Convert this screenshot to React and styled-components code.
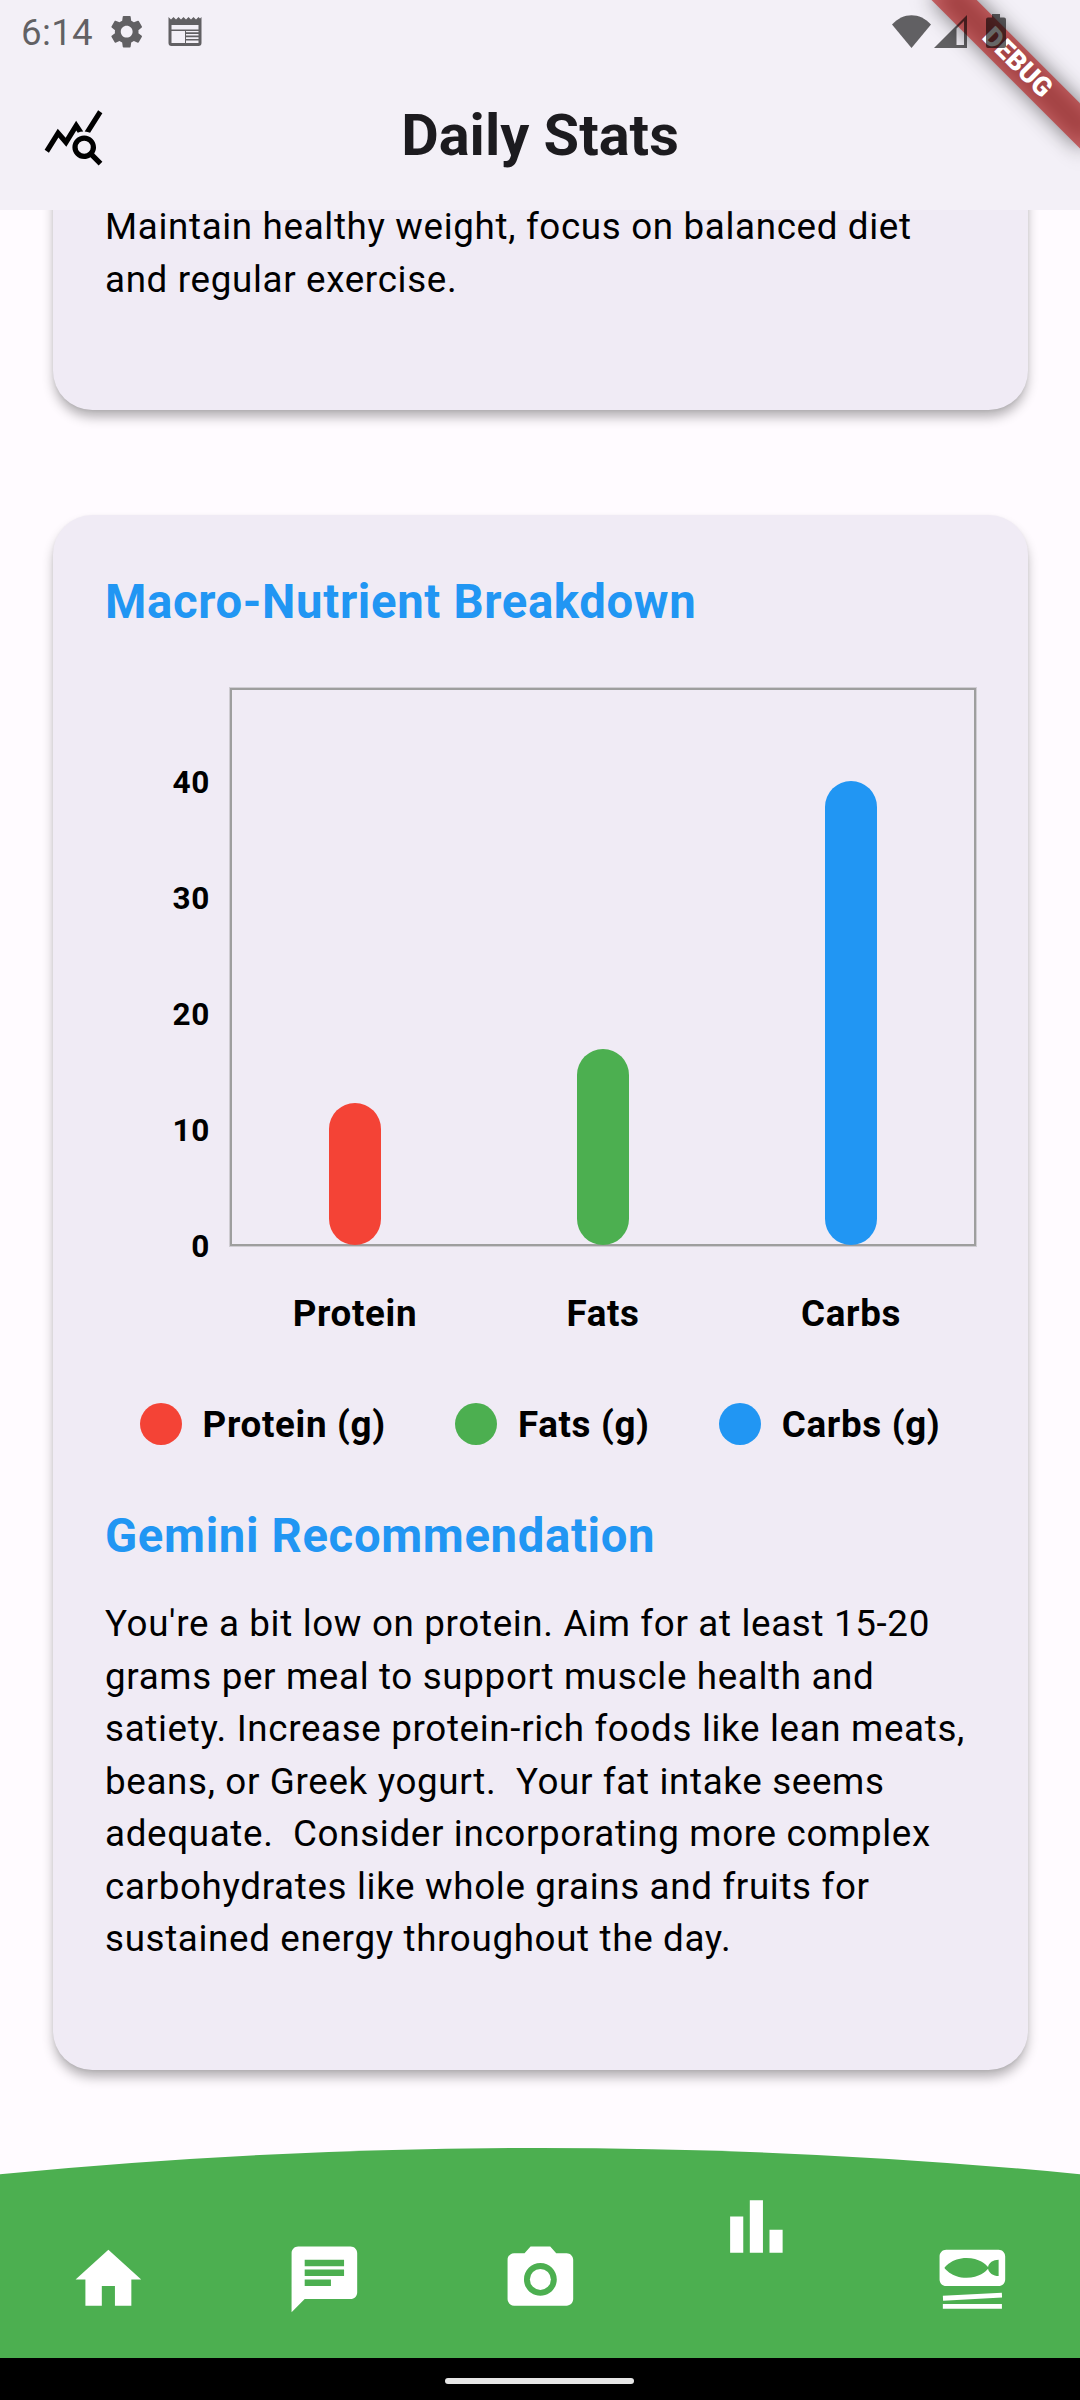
import React from 'react';
import styled, { createGlobalStyle } from 'styled-components';
import { MdHome, MdChat, MdCameraAlt, MdBarChart, MdSetMeal, MdQueryStats, MdSettings } from 'react-icons/md';

const Global = createGlobalStyle`
  *, *::before { box-sizing: border-box; }
  body { margin: 0; background: #fffbff; }
`;

const Screen = styled.div`
  position: relative;
  display: flex;
  flex-direction: column;
  width: 1080px;
  height: 2400px;
  overflow: hidden;
  background: #fffbff;
  color: #000;
  font-family: Roboto, "Noto Sans", sans-serif;
`;

const Header = styled.header`
  display: flex;
  flex-direction: column;
  flex: none;
  height: 210px;
  background: #f3f0f7;
`;

const StatusBar = styled.div`
  position: relative;
  z-index: 3;
  display: flex;
  align-items: center;
  justify-content: space-between;
  height: 63px;
  padding: 0 74px 0 21px;
  color: rgba(0, 0, 0, 0.6);
`;

const StatusGroup = styled.div`
  display: flex;
  align-items: center;
  gap: ${(p) => p.$gap}px;
  padding-bottom: ${(p) => p.$lift || 0}px;
  svg { display: block; }
`;

const Clock = styled.span`
  width: 71px;
  font-size: 36.75px;
  line-height: 44px;
  letter-spacing: 0.3px;
  padding-top: 3px;
  margin-right: -6px;
`;

const AppBar = styled.div`
  display: grid;
  grid-template-columns: 147px 1fr 147px;
  align-items: center;
  justify-items: center;
  height: 147px;
  svg { display: block; color: #000; }
`;

const Title = styled.h1`
  margin: 0;
  padding-bottom: 4px;
  font-size: 57.75px;
  line-height: 74px;
  font-weight: 700;
  color: #1c1b1f;
`;

const BannerClip = styled.div`
  position: absolute;
  z-index: 2;
  top: 0;
  right: 0;
  width: 240px;
  height: 210px;
  overflow: hidden;
`;

const Banner = styled.div`
  position: absolute;
  top: 73px;
  left: 135px;
  width: 210px;
  height: 31.5px;
  transform-origin: 105px -73px;
  transform: rotate(45deg);
  &::before {
    content: "";
    position: absolute;
    inset: 0;
    background: rgba(0, 0, 0, 0.5);
    filter: blur(10.4px);
  }
`;

const BannerText = styled.div`
  position: relative;
  height: 100%;
  background: rgba(183, 28, 28, 0.627);
  color: #fff;
  font-size: 26.8px;
  font-weight: 900;
  line-height: 31.5px;
  text-align: center;
`;

const Content = styled.main`
  display: flex;
  flex-direction: column;
  flex: 1;
  gap: 105px;
  min-height: 0;
  overflow: hidden;
  padding: 0 52.5px;
`;

const Card = styled.section`
  flex: none;
  background: #f0ebf5;
  border-radius: 39.4px;
  margin-top: ${(p) => (p.$scrolled ? -110 : 0)}px;
  padding: ${(p) => (p.$scrolled ? 101 : 53.5)}px 52.5px 104px;
  box-shadow: 0 8px 12px -1px rgba(0, 0, 0, 0.3), 0 1px 3px rgba(0, 0, 0, 0.06);
`;

const Heading = styled.h2`
  margin: 0;
  padding-top: ${(p) => p.$top || 0}px;
  font-size: 47.25px;
  line-height: 67.5px;
  letter-spacing: 0.66px;
  font-weight: 700;
  color: #2196f3;
`;

const Paragraph = styled.p`
  margin: 0;
  padding-top: ${(p) => p.$top || 0}px;
  font-size: 36.75px;
  line-height: 52.5px;
  letter-spacing: 0.66px;
  white-space: pre;
`;

const Chart = styled.div`
  display: grid;
  grid-template-columns: 125px 746px;
  margin-top: 52px;
`;

const Axis = styled.div`
  display: flex;
  flex-direction: column-reverse;
  justify-content: flex-start;
  height: 558px;
  text-align: right;
  padding-right: 20px;
`;

const Tick = styled.span`
  display: flex;
  align-items: center;
  justify-content: flex-end;
  flex: none;
  height: 116px;
  margin-bottom: ${(p) => (p.$first ? -58.2 : 0)}px;
  font-size: 31.5px;
  font-weight: 700;
  letter-spacing: 0.66px;
`;

const Plot = styled.div`
  display: grid;
  grid-template-columns: repeat(3, 248px);
  justify-content: center;
  align-items: end;
  justify-items: center;
  height: 558px;
  border: 2px solid #9e9e9e;
  box-shadow: 0 0 0 1px rgba(158, 158, 158, 0.4);
`;

const Bar = styled.div`
  width: 52.5px;
  border-radius: 26.25px;
  margin-bottom: -0.7px;
  background: ${(p) => p.$color};
`;

const Labels = styled.div`
  grid-column: 2;
  display: grid;
  grid-template-columns: repeat(3, 248px);
  justify-content: center;
  justify-items: center;
  padding-top: 42px;
`;

const Strong = styled.span`
  padding-top: ${(p) => p.$top || 0}px;
  font-size: 36.75px;
  line-height: 52.5px;
  font-weight: 700;
  letter-spacing: 0.66px;
`;

const Legend = styled.div`
  display: flex;
  justify-content: space-around;
  margin-top: 56px;
`;

const LegendItem = styled.div`
  display: flex;
  align-items: center;
  gap: 21px;
`;

const Dot = styled.i`
  width: 42px;
  height: 42px;
  border-radius: 50%;
  background: ${(p) => p.$color};
`;

const NavBar = styled.nav`
  flex: none;
  display: grid;
  grid-template: 210px / 1fr;
  height: 210px;
  > * { grid-area: 1 / 1; }
`;

const NavItems = styled.div`
  display: grid;
  grid-template-columns: repeat(5, 1fr);
  justify-items: center;
  color: #fff;
`;

const NavItem = styled.div`
  padding-top: ${(p) => (p.$active ? 39 : 92)}px;
  svg { display: block; }
`;

const Gesture = styled.footer`
  flex: none;
  display: flex;
  justify-content: center;
  height: 42px;
  padding: 20px 1px 0 0;
  background: #000;
`;

const Handle = styled.div`
  width: 189px;
  height: 6px;
  border-radius: 3px;
  background: #e6e6e6;
`;

const data = [
  { name: 'Protein', value: 12.2, color: '#f44336' },
  { name: 'Fats', value: 16.9, color: '#4caf50' },
  { name: 'Carbs', value: 40, color: '#2196f3' },
];

const nav = [
  { Icon: MdHome }, { Icon: MdChat }, { Icon: MdCameraAlt }, { Icon: MdBarChart, active: true }, { Icon: MdSetMeal },
];

const advice = `You're a bit low on protein. Aim for at least 15-20
grams per meal to support muscle health and
satiety. Increase protein-rich foods like lean meats,
beans, or Greek yogurt.  Your fat intake seems
adequate.  Consider incorporating more complex
carbohydrates like whole grains and fruits for
sustained energy throughout the day.`;

const NewsIcon = styled(({ className }) => (
  <svg className={className} width="34" height="30" viewBox="0 0 34 30" fill="currentColor">
    <path fillRule="evenodd" d="M.5 0L3 2.5 5.5 0 8 2.5 10.500 0 13 2.500 15.500 0 18 2.500 20.500 0 23 2.500 25.500 0 28 2.500 30.500 0 32 1.500 33.500 0V26Q33.500 29 30.500 29H3.500Q.5 29 .5 26ZM3.500 8V12.500H30.500V8ZM3.500 14V26H17V14ZM18 14V15.300H30.500V14ZM18 17V18.600H30.500V17ZM18 20.300V21.900H30.500V20.300ZM18 23.600V26H30.500V23.600Z" />
  </svg>
))`
  margin-left: 1px;
`;

const WifiIcon = () => (
  <svg width="39" height="33" viewBox="0 0 39 33" fill="currentColor">
    <path d="M0 9.500C11-3 28-3 39 9.500L19.500 33Z" />
  </svg>
);

const SignalIcon = () => (
  <svg width="33" height="33" viewBox="0 0 33 33" fill="currentColor">
    <path fillRule="evenodd" d="M0 33L33 0V33ZM22.500 13.500V30H30V6Z" />
  </svg>
);

const BatteryIcon = styled(({ className }) => (
  <svg className={className} width="20" height="34" viewBox="0 0 20 34" fill="currentColor">
    <path d="M6 0H14V3.500H18Q20 3.500 20 5.500V32Q20 34 18 34H2Q0 34 0 32V5.500Q0 3.500 2 3.500H6Z" />
  </svg>
))`
  margin-left: 16px;
`;

export default function App() {
  return (
    <Screen>
      <Global />
      <Header>
        <StatusBar>
          <StatusGroup $gap={21}>
            <Clock>6:14</Clock>
            <MdSettings size={39.4} />
            <NewsIcon />
          </StatusGroup>
          <StatusGroup $gap={3} $lift={1}>
            <WifiIcon />
            <SignalIcon />
            <BatteryIcon />
          </StatusGroup>
        </StatusBar>
        <AppBar>
          <MdQueryStats size={63} />
          <Title>Daily Stats</Title>
        </AppBar>
      </Header>
      <BannerClip>
        <Banner><BannerText>DEBUG</BannerText></Banner>
      </BannerClip>
      <Content>
        <Card $scrolled>
          <Paragraph>{'Maintain healthy weight, focus on balanced diet\nand regular exercise.'}</Paragraph>
        </Card>
        <Card>
          <Heading>Macro-Nutrient Breakdown</Heading>
          <Chart>
            <Axis>
              {[0, 10, 20, 30, 40].map((t) => <Tick key={t} $first={t === 0}>{t}</Tick>)}
            </Axis>
            <Plot>
              {data.map((d) => (
                <Bar key={d.name} $color={d.color} style={{ height: d.value * 11.59 }} />
              ))}
            </Plot>
            <Labels>
              {data.map((d) => <Strong key={d.name}>{d.name}</Strong>)}
            </Labels>
          </Chart>
          <Legend>
            {data.map((d) => (
              <LegendItem key={d.name}>
                <Dot $color={d.color} />
                <Strong $top={2}>{d.name} (g)</Strong>
              </LegendItem>
            ))}
          </Legend>
          <Heading $top={52}>Gemini Recommendation</Heading>
          <Paragraph $top={27.5}>{advice}</Paragraph>
        </Card>
      </Content>
      <NavBar>
        <svg width="1080" height="210" viewBox="0 0 1080 210">
          <path d="M0 26.200Q540-26.200 1080 26.200V210H0Z" fill="#4caf50" />
        </svg>
        <NavItems>
          {nav.map(({ Icon, active }, i) => (
            <NavItem key={i} $active={active}><Icon size={78.75} /></NavItem>
          ))}
        </NavItems>
      </NavBar>
      <Gesture><Handle /></Gesture>
    </Screen>
  );
}
